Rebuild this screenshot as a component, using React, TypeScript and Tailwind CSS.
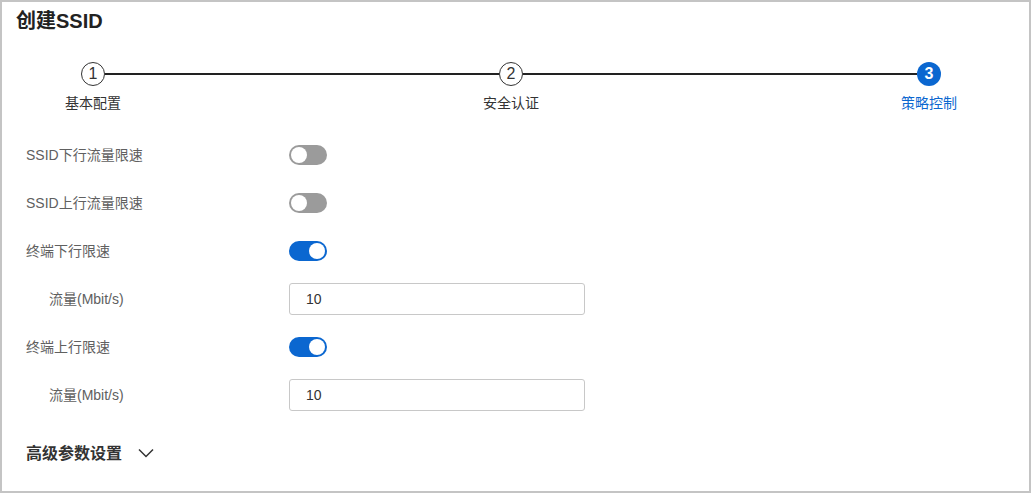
const font = { fontFamily: '"Liberation Sans", "Noto Sans CJK SC", sans-serif' }

function Toggle({ on }: { on: boolean }) {
  return (
    <div
      className={`w-[38px] h-[20px] rounded-full flex items-center px-[2px] ${
        on ? 'bg-[#0b67d0] justify-end' : 'bg-[#9b9b9b] justify-start'
      }`}
    >
      <div className="w-4 h-4 rounded-full bg-white" />
    </div>
  )
}

function Step({ n, label, active }: { n: number; label: string; active?: boolean }) {
  return (
    <div className="w-6 flex flex-col items-center">
      <div
        className={`w-6 h-6 rounded-full flex items-center justify-center text-[16px] leading-none ${
          active ? 'bg-[#0b67d0] text-white font-bold' : 'border border-[#333] text-[#333] bg-white'
        }`}
      >
        {n}
      </div>
      <div
        className={`mt-[7px] whitespace-nowrap text-[14px] leading-[20px] ${
          active ? 'text-[#0b67d0]' : 'text-[#333]'
        }`}
      >
        {label}
      </div>
    </div>
  )
}

const rows = [
  { label: 'SSID下行流量限速', kind: 'toggle', on: false },
  { label: 'SSID上行流量限速', kind: 'toggle', on: false },
  { label: '终端下行限速', kind: 'toggle', on: true },
  { label: '流量(Mbit/s)', kind: 'input', sub: true },
  { label: '终端上行限速', kind: 'toggle', on: true },
  { label: '流量(Mbit/s)', kind: 'input', sub: true },
]

export default function App() {
  return (
    <div style={font} className="w-[1031px] h-[493px] border-2 border-[#c4c4c4] bg-white">
      <h1 className="pl-[14px] pt-[6px] text-[20px] leading-[26px] font-bold text-[#222]">创建SSID</h1>
      <div className="mt-[28px] ml-[79px] mr-[88px] flex items-start">
        <Step n={1} label="基本配置" />
        <div className="flex-1 h-[2px] bg-[#222] mt-[11px]" />
        <Step n={2} label="安全认证" />
        <div className="flex-1 h-[2px] bg-[#222] mt-[11px]" />
        <Step n={3} label="策略控制" active />
      </div>
      <div className="mt-[18px] pl-6">
        {rows.map((r, i) => (
          <div key={i} className="h-12 flex items-center">
            <div className={`w-[263px] text-[14px] text-[#606060] ${r.sub ? 'pl-[23px]' : ''}`}>{r.label}</div>
            {r.kind === 'toggle' ? (
              <Toggle on={!!r.on} />
            ) : (
              <div className="w-[296px] h-8 border border-[#c8c8c8] rounded-[3px] flex items-center pl-4 text-[14px] text-[#333]">
                10
              </div>
            )}
          </div>
        ))}
        <div className="mt-[23px] flex items-center gap-4">
          <span className="text-[16px] leading-6 font-bold text-[#333]">高级参数设置</span>
          <svg width="16" height="10" viewBox="0 0 16 10" fill="none" className="mt-[-2px]">
            <path d="M1 1.5 8 8.5 15 1.5" stroke="#333" strokeWidth="1.5" />
          </svg>
        </div>
      </div>
    </div>
  )
}
